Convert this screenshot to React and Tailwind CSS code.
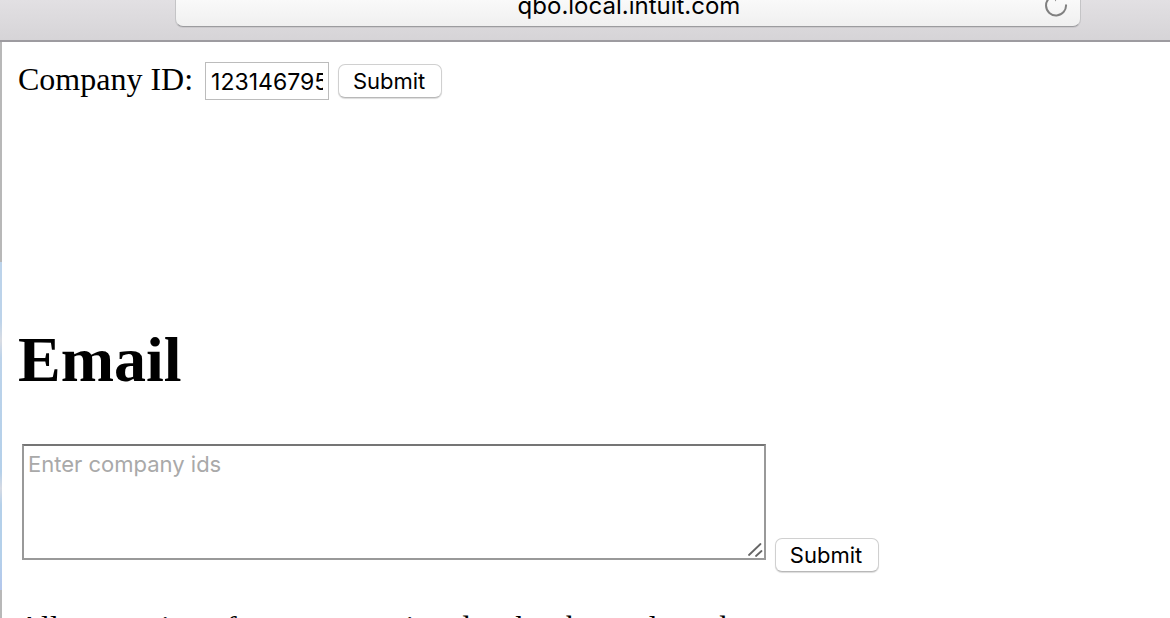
import React from "react";

function AddressBar() {
  return (
    <header className="flex h-[42px] shrink-0 items-end overflow-hidden border-b-2 border-[#9d9ba0] bg-linear-to-b from-[#e2e0e3] to-[#d6d4d7] pr-[89px] pb-[13px] pl-[175px]">
      <div className="relative flex h-11 flex-1 items-end justify-center rounded-lg border border-[#c4c4c6] border-b-[#9c9c9f] bg-linear-to-b from-white to-[#f0f0f0] pb-1 pl-0.5 shadow-[0_1px_0_#cbc9cc]">
        <a
          href="#top"
          className="font-[Inter,sans-serif] text-[24px] leading-8 text-black"
        >
          qbo.local.intuit.com
        </a>
        <button
          type="button"
          aria-label="Reload"
          className="absolute right-3 bottom-[9px] size-6"
        >
          <svg viewBox="0 0 24 24" className="size-6" fill="none">
            <path
              d="M22 11.5 A10 10 0 1 1 12 2.5"
              stroke="#808080"
              strokeWidth="2"
            />
            <path d="M11 -2 L16 2.5 L11 8.5 Z" fill="#808080" />
          </svg>
        </button>
      </div>
    </header>
  );
}

function SubmitButton() {
  return (
    <button
      type="submit"
      className="h-[34px] w-[104px] rounded-[7px] border border-[#d0d0d0] border-b-[#b8b8b8] bg-white pr-0.5 font-[Inter,sans-serif] text-[22px] leading-8 text-black shadow-[0_1px_1px_#dcdcdc]"
    >
      Submit
    </button>
  );
}

export default function App() {
  const stop = (event) => event.preventDefault();
  return (
    <div
      id="top"
      className="flex h-screen flex-col overflow-hidden bg-white font-['Liberation_Serif',serif] text-black"
    >
      <AddressBar />
      <div className="flex flex-1">
        <div className="flex w-0.5 shrink-0 flex-col bg-[#b8b8b8] pt-[220px]">
          <div className="h-[328px] bg-[linear-gradient(#bcd3ea_0%,#bcd3ea_18%,#d9dce3_24%,#bcd3ea_29%,#b4d0ea_64%,#d6dae3_69%,#b4d0ea_74%,#b4d0ea_90%,#b3c6ec_100%)]" />
        </div>
        <main className="flex-1 px-4 pt-5">
          <form onSubmit={stop} className="flex h-[38px] items-center">
            <label htmlFor="company" className="pb-1 text-[32px] leading-9">
              Company ID:
            </label>
            <input
              id="company"
              type="text"
              defaultValue="123146795"
              className="mr-[9px] ml-3 h-[38px] w-[124px] border border-[#bcbcbc] bg-white px-[5px] pt-0.5 font-[Inter,sans-serif] text-[23px] outline-none"
            />
            <SubmitButton />
          </form>
          <h1 className="mt-56 text-[64px] leading-[72px] font-bold">Email</h1>
          <form onSubmit={stop} className="mt-12 flex items-end pl-1">
            <div className="relative mr-[9px] mb-3 w-[744px]">
              <textarea
                aria-label="Company ids"
                placeholder="Enter company ids"
                className="block h-[116px] w-full resize-none border-2 border-[#999] border-t-[#757575] bg-white px-1 py-0.5 font-[Inter,sans-serif] text-[22px] leading-8 outline-none placeholder:text-[#a9a9a9]"
              />
              <svg
                viewBox="0 0 16 16"
                className="pointer-events-none absolute right-0.5 bottom-0.5 size-4"
                stroke="#666"
                strokeWidth="1.8"
                strokeLinecap="round"
              >
                <path d="M1 13 L12.5 2 M8 14 L13.5 9" />
              </svg>
            </div>
            <SubmitButton />
          </form>
          <p className="mt-[37px] text-[32px] leading-9">
            All generation of user transaction data has been cleared
          </p>
        </main>
      </div>
    </div>
  );
}
